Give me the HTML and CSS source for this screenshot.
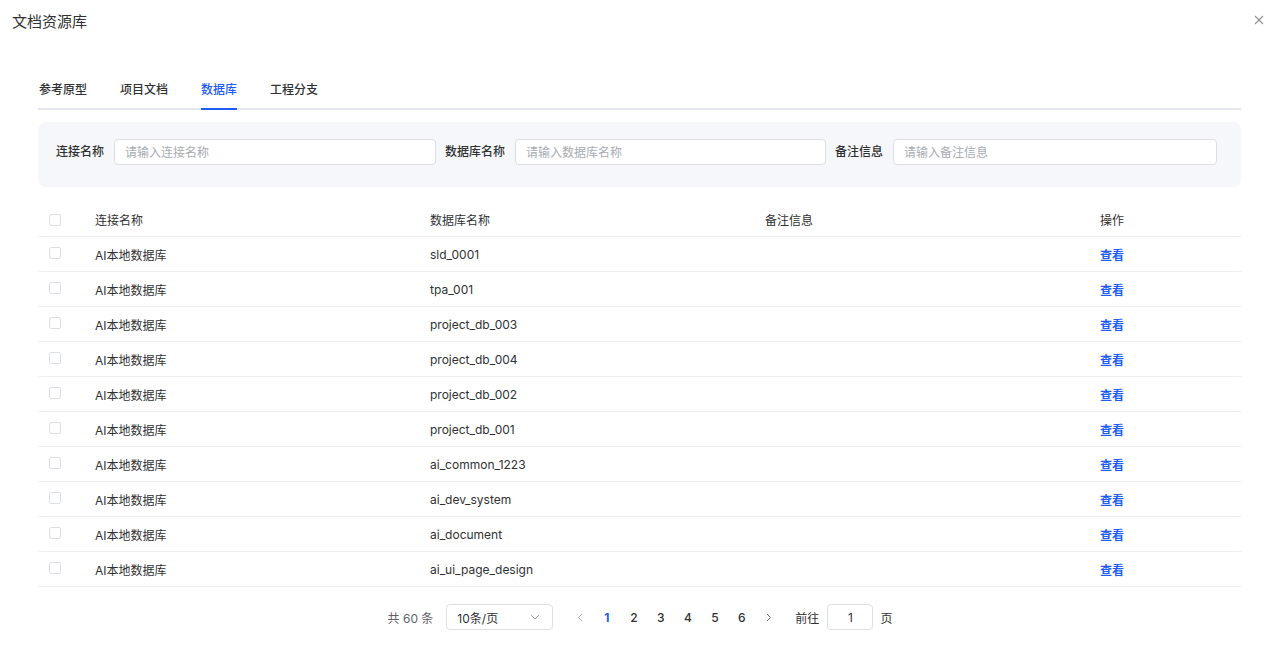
FILE: index.html
```html
<!DOCTYPE html>
<html lang="zh-CN">
<head>
  <meta charset="UTF-8">
  <meta name="viewport" content="width=device-width, initial-scale=1.0">
  <title>文档资源库</title>
  <link rel="stylesheet" href="styles.css">
</head>
<body>
  <div class="dialog">
    <div class="dialog-header">
      <span class="dialog-title">文档资源库</span>
      <button class="dialog-close" aria-label="关闭">
        <svg width="10" height="10" viewBox="0 0 10 10"><path d="M1 1L9 9M9 1L1 9" stroke="#909399" stroke-width="1.1" fill="none"/></svg>
      </button>
    </div>

    <div class="dialog-body">
      <div class="tabs">
        <div class="tab">参考原型</div>
        <div class="tab">项目文档</div>
        <div class="tab active">数据库</div>
        <div class="tab">工程分支</div>
      </div>

      <div class="filter-bar">
        <label class="filter-label">连接名称</label>
        <input class="filter-input input-conn" type="text" placeholder="请输入连接名称">
        <label class="filter-label">数据库名称</label>
        <input class="filter-input input-db" type="text" placeholder="请输入数据库名称">
        <label class="filter-label">备注信息</label>
        <input class="filter-input input-note" type="text" placeholder="请输入备注信息">
      </div>

      <table class="data-table">
        <colgroup>
          <col class="col-check">
          <col class="col-name">
          <col class="col-name">
          <col class="col-name">
          <col>
        </colgroup>
        <thead>
          <tr>
            <th><span class="checkbox"></span></th>
            <th>连接名称</th>
            <th>数据库名称</th>
            <th>备注信息</th>
            <th>操作</th>
          </tr>
        </thead>
        <tbody id="table-body"></tbody>
      </table>

      <div class="pagination">
        <span class="total">共 60 条</span>
        <div class="page-size">
          <span>10条/页</span>
          <svg width="10" height="6" viewBox="0 0 10 6"><path d="M1 1L5 5L9 1" stroke="#a8abb2" stroke-width="1" fill="none"/></svg>
        </div>
        <div class="pager">
          <span class="pager-btn arrow">
            <svg width="6" height="9" viewBox="0 0 6 9"><path d="M5 1L1.5 4.5L5 8" stroke="#a8abb2" stroke-width="1" fill="none"/></svg>
          </span>
          <span class="pager-btn current">1</span>
          <span class="pager-btn">2</span>
          <span class="pager-btn">3</span>
          <span class="pager-btn">4</span>
          <span class="pager-btn">5</span>
          <span class="pager-btn">6</span>
          <span class="pager-btn arrow">
            <svg width="6" height="9" viewBox="0 0 6 9"><path d="M1 1L4.5 4.5L1 8" stroke="#606266" stroke-width="1" fill="none"/></svg>
          </span>
        </div>
        <span class="jump-label">前往</span>
        <input class="jump-input" type="text" value="1">
        <span class="jump-unit">页</span>
      </div>
    </div>
  </div>

  <script>
    // database rows for the current page
    const rows = [
      'sld_0001', 'tpa_001', 'project_db_003', 'project_db_004', 'project_db_002',
      'project_db_001', 'ai_common_1223', 'ai_dev_system', 'ai_document', 'ai_ui_page_design'
    ];
    const tbody = document.getElementById('table-body');
    rows.forEach(db => {
      const tr = document.createElement('tr');
      tr.innerHTML = `
        <td><span class="checkbox"></span></td>
        <td>AI本地数据库</td>
        <td>${db}</td>
        <td></td>
        <td><a class="link" href="#">查看</a></td>
      `;
      tbody.appendChild(tr);
    });
  </script>
</body>
</html>
```

FILE: styles.css
```css
body {
  margin: 0;
  padding: 0;
  background: #fff;
  font-family: 'Inter', 'Noto Sans CJK SC', sans-serif;
  color: #303133;
}

.dialog {
  width: 1280px;
  height: 654px;
  background: #fff;
  box-sizing: border-box;
}

.dialog-header {
  display: flex;
  justify-content: space-between;
  align-items: center;
  padding: 11px 16px 0 12px;
  height: 22px;
}

.dialog-title {
  font-size: 15px;
  color: #303133;
  line-height: 22px;
}

.dialog-close {
  border: none;
  background: none;
  padding: 0;
  margin-top: -5px;
  cursor: pointer;
  display: flex;
}

.dialog-body {
  padding: 0 39px 0 38px;
}

/* tabs */
.tabs {
  display: flex;
  margin-top: 39px;
  border-bottom: 2px solid #e4e7ed;
  height: 36px;
  padding-left: 1px;
}

.tab {
  font-size: 12px;
  font-weight: 500;
  color: #303133;
  line-height: 36px;
  margin-right: 33px;
  position: relative;
}

.tab.active {
  color: #1d5cf5;
}

.tab.active::after {
  content: '';
  position: absolute;
  left: 0;
  right: 0;
  bottom: -2px;
  height: 2px;
  background: #1d5cf5;
}

/* filter */
.filter-bar {
  margin-top: 12px;
  background: #f5f7fa;
  border-radius: 8px;
  height: 65px;
  box-sizing: border-box;
  display: flex;
  align-items: flex-start;
  padding: 17px 0 0 18px;
}

.filter-label {
  font-size: 12px;
  font-weight: 500;
  color: #303133;
  margin-right: 10px;
  white-space: nowrap;
  line-height: 26px;
}

.filter-input {
  height: 26px;
  box-sizing: border-box;
  border: 1px solid #dcdfe6;
  border-radius: 4px;
  background: #fff;
  padding: 0 10px;
  font-family: inherit;
  font-size: 12px;
  color: #303133;
  margin-right: 9px;
  outline: none;
}

.filter-input::placeholder {
  color: #a8abb2;
}

.input-conn { width: 322px; }
.input-db { width: 311px; }
.input-note { width: 324px; }

/* table */
.data-table {
  width: 100%;
  margin-top: 16px;
  border-collapse: collapse;
  table-layout: fixed;
  font-size: 12px;
}

.col-check { width: 47px; }
.col-name { width: 335px; }

.data-table th,
.data-table td {
  text-align: left;
  padding: 0 10px;
  border-bottom: 1px solid #ebeef5;
  height: 34px;
  color: #303133;
  font-weight: 400;
  white-space: nowrap;
}

.data-table th {
  height: 33px;
}

.data-table th:first-child,
.data-table td:first-child {
  padding-left: 11px;
}

.checkbox {
  display: block;
  width: 10px;
  height: 10px;
  border: 1px solid #dcdfe6;
  border-radius: 2px;
  background: #fff;
}

.data-table td .checkbox {
  margin-top: -2px;
}

.link {
  color: #1d5cf5;
  font-weight: 600;
  text-decoration: none;
}

/* pagination */
.pagination {
  display: flex;
  justify-content: center;
  align-items: center;
  margin-top: 17px;
  font-size: 12px;
  color: #606266;
  padding-left: 1px;
}

.total {
  margin-right: 13px;
}

.page-size {
  width: 107px;
  height: 26px;
  box-sizing: border-box;
  border: 1px solid #dcdfe6;
  border-radius: 4px;
  display: flex;
  align-items: center;
  justify-content: space-between;
  padding: 0 12px 0 10px;
  color: #303133;
  margin-right: 13px;
}

.pager {
  display: flex;
  align-items: center;
  margin-right: 13px;
}

.pager-btn {
  width: 27px;
  text-align: center;
  color: #303133;
  font-weight: 500;
  display: flex;
  justify-content: center;
  align-items: center;
  height: 26px;
}

.pager-btn.current {
  color: #1d5cf5;
  font-weight: 700;
}

.jump-label {
  margin-right: 8px;
  color: #303133;
}

.jump-input {
  width: 46px;
  height: 26px;
  box-sizing: border-box;
  border: 1px solid #dcdfe6;
  border-radius: 4px;
  text-align: center;
  font-family: inherit;
  font-size: 12px;
  color: #303133;
  margin-right: 7px;
  outline: none;
}

.jump-unit {
  color: #303133;
}
```
